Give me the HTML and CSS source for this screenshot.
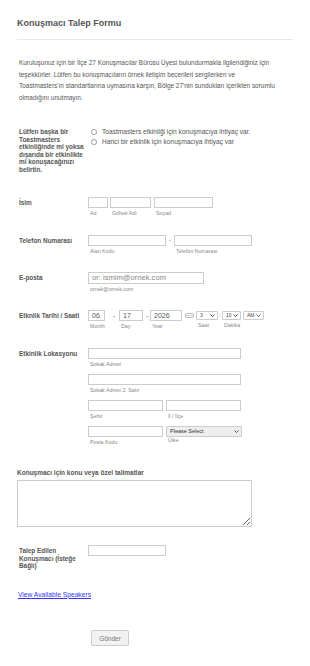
FILE: index.html
```html
<!DOCTYPE html>
<html lang="tr">
<head>
    <meta charset="UTF-8">
    <meta name="viewport" content="width=device-width, initial-scale=1.0">
    <title>Konuşmacı Talep Formu</title>
    <link rel="stylesheet" href="styles.css">
</head>
<body>

    <form class="form">
        <div class="form-header">
            <h2>Konuşmacı Talep Formu</h2>
        </div>

        <p class="intro">Kuruluşunuz için bir İlçe 27 Konuşmacılar Bürosu Üyesi bulundurmakla ilgilendiğiniz için teşekkürler. Lütfen bu konuşmacıların örnek iletişim becerileri sergilerken ve<br>Toastmasters'ın standartlarına uymasına karşın, Bölge 27'nin sundukları içerikten sorumlu olmadığını unutmayın.</p>

        <div class="row row-radio">
            <label class="row-label">Lütfen başka bir Toastmasters etkinliğinde mi yoksa dışarıda bir etkinlikte mi konuşacağınızı belirtin.</label>
            <div class="radio-list">
                <label class="radio-item"><input type="radio" name="event">Toastmasters etkinliği için konuşmacıya ihtiyaç var.</label>
                <label class="radio-item"><input type="radio" name="event">Harici bir etkinlik için konuşmacıya ihtiyaç var</label>
            </div>
        </div>

        <div class="row row-name">
            <label class="row-label">İsim</label>
            <div class="field-group">
                <span class="sub-field"><input class="text-input w-first" type="text"><span class="sub-label">Ad</span></span>
                <span class="sub-field gap-2"><input class="text-input w-middle" type="text"><span class="sub-label">Göbek Adı</span></span>
                <span class="sub-field gap-3"><input class="text-input w-last" type="text"><span class="sub-label">Soyad</span></span>
            </div>
        </div>

        <div class="row">
            <label class="row-label">Telefon Numarası</label>
            <div class="field-group">
                <span class="sub-field"><input class="text-input w-phone" type="text"><span class="sub-label">Alan Kodu</span></span>
                <span class="phone-sep">-</span>
                <span class="sub-field"><input class="text-input w-phone" type="text"><span class="sub-label">Telefon Numarası</span></span>
            </div>
        </div>

        <div class="row row-email">
            <label class="row-label">E-posta</label>
            <div class="sub-field">
                <input class="text-input email-input" type="email" placeholder="or: ismim@ornek.com">
                <span class="sub-label">ornek@ornek.com</span>
            </div>
        </div>

        <div class="row row-date">
            <label class="row-label">Etknlik Tarihi / Saati</label>
            <div class="field-group">
                <span class="sub-field"><input class="text-input w-month" type="text" value="06"><span class="sub-label">Month</span></span>
                <span class="date-sep sep-a">-</span>
                <span class="sub-field"><input class="text-input w-day" type="text" value="17"><span class="sub-label">Day</span></span>
                <span class="date-sep sep-b">-</span>
                <span class="sub-field"><input class="text-input w-year" type="text" value="2026"><span class="sub-label">Year</span></span>
                <svg class="cal-icon" width="9" height="5" viewBox="0 0 9 5">
                    <rect x="0.5" y="0.5" width="8" height="4" rx="1" fill="none" stroke="#aaa" stroke-width="0.8"/>
                    <line x1="0.5" y1="2.5" x2="8.5" y2="2.5" stroke="#aaa" stroke-width="0.6"/>
                </svg>
                <span class="sub-field select-field w-hour">
                    <select class="select-input"><option>3</option></select>
                    <svg class="chevron" width="5" height="3" viewBox="0 0 5 3"><path d="M0.5 0.5 L2.5 2.5 L4.5 0.5" fill="none" stroke="#444" stroke-width="0.9"/></svg>
                    <span class="sub-label">Saat</span>
                </span>
                <span class="time-sep">:</span>
                <span class="sub-field select-field w-min">
                    <select class="select-input"><option>10</option></select>
                    <svg class="chevron" width="5" height="3" viewBox="0 0 5 3"><path d="M0.5 0.5 L2.5 2.5 L4.5 0.5" fill="none" stroke="#444" stroke-width="0.9"/></svg>
                    <span class="sub-label">Dakika</span>
                </span>
                <span class="sub-field select-field w-ampm">
                    <select class="select-input"><option>AM</option></select>
                    <svg class="chevron" width="5" height="3" viewBox="0 0 5 3"><path d="M0.5 0.5 L2.5 2.5 L4.5 0.5" fill="none" stroke="#444" stroke-width="0.9"/></svg>
                </span>
            </div>
        </div>

        <div class="row row-location">
            <label class="row-label">Etkinlik Lokasyonu</label>
            <div class="address">
                <div class="sub-field addr-line"><input class="text-input w-full" type="text"><span class="sub-label">Sokak Adresi</span></div>
                <div class="sub-field addr-line"><input class="text-input w-full" type="text"><span class="sub-label">Sokak Adresi 2. Satır</span></div>
                <div class="field-group addr-line">
                    <span class="sub-field"><input class="text-input w-half" type="text"><span class="sub-label">Şehir</span></span>
                    <span class="sub-field gap-3"><input class="text-input w-half" type="text"><span class="sub-label">İl / İlçe</span></span>
                </div>
                <div class="field-group">
                    <span class="sub-field"><input class="text-input w-half" type="text"><span class="sub-label">Posta Kodu</span></span>
                    <span class="sub-field select-field gap-3 w-country">
                        <select class="select-input country-select"><option>Please Select</option></select>
                        <svg class="chevron" width="5" height="3" viewBox="0 0 5 3"><path d="M0.5 0.5 L2.5 2.5 L4.5 0.5" fill="none" stroke="#444" stroke-width="0.9"/></svg>
                        <span class="sub-label">Ülke</span>
                    </span>
                </div>
            </div>
        </div>

        <div class="block">
            <label class="block-label">Konuşmacı için konu veya özel talimatlar</label>
            <textarea class="notes"></textarea>
        </div>

        <div class="row row-speaker">
            <label class="row-label">Talep Edilen Konuşmacı (İsteğe Bağlı)</label>
            <input class="text-input w-phone" type="text">
        </div>

        <a class="speakers-link" href="#">View Available Speakers</a>

        <div class="submit-area">
            <button class="submit-btn" type="button">Gönder</button>
        </div>
    </form>

</body>
</html>
```

FILE: styles.css
```css
body {
    margin: 0;
    font-family: "Liberation Sans", Arial, sans-serif;
    color: #555;
    background-color: #fff;
}

.form {
    width: 276px;
    padding: 0 17px;
}

.form-header {
    padding: 18px 0 11px;
    border-bottom: 1px solid #e8e8e8;
}

.form-header h2 {
    margin: 0;
    font-size: 9px;
    line-height: 10px;
    font-weight: bold;
    color: #555;
}

.intro {
    width: 272px;
    margin: 17px 0 0 2px;
    font-size: 6.45px;
    line-height: 11.6px;
}

.row {
    display: flex;
    align-items: flex-start;
    padding-left: 2px;
    margin-top: 19px;
}

.row-label {
    flex: none;
    width: 66px;
    padding: 2px 3px 0 0;
    font-size: 6.4px;
    line-height: 7.5px;
    font-weight: bold;
}

.row-radio {
    margin-top: 23px;
}

.radio-list {
    display: flex;
    flex-direction: column;
    gap: 3px;
    padding: 2px 0 0 3px;
}

.radio-item {
    display: flex;
    align-items: center;
    font-size: 6.6px;
    line-height: 7px;
}

.radio-item input {
    appearance: none;
    width: 5.5px;
    height: 5.5px;
    margin: 0 5.5px 0 0;
    border: 0.6px solid #999;
    border-radius: 50%;
}

.row-name {
    margin-top: 23.5px;
}

.field-group {
    display: flex;
    align-items: flex-start;
}

.sub-field {
    display: flex;
    flex-direction: column;
}

.sub-label {
    margin-top: 2px;
    padding-left: 2px;
    font-size: 5.3px;
    line-height: 6px;
    color: #888;
}

.text-input {
    box-sizing: border-box;
    height: 11px;
    margin: 0;
    padding: 0 3px;
    border: 1px solid #ccc;
    font-family: "Liberation Sans", Arial, sans-serif;
    font-size: 7px;
    color: #555;
    background: #fff;
}

.gap-2 { margin-left: 2px; }
.gap-3 { margin-left: 3px; }

.w-first { width: 20px; }
.w-middle { width: 41px; }
.w-last { width: 59px; }
.w-phone { width: 78px; }
.w-full { width: 153px; }
.w-half { width: 75px; }

.phone-sep {
    width: 8px;
    text-align: center;
    font-size: 6px;
    line-height: 11px;
}

.row-email {
    margin-top: 18px;
}

.email-input {
    width: 116px;
    height: 12px;
    font-size: 7.6px;
}

.email-input::placeholder {
    color: #888;
}

.row-date {
    margin-top: 18px;
}

.w-month { width: 17px; }
.w-day { width: 24px; }
.w-year { width: 32px; }

.date-sep {
    font-size: 7px;
    line-height: 11px;
}

.sep-a {
    width: 14px;
    padding-left: 8px;
    box-sizing: border-box;
}

.sep-b {
    width: 7px;
    padding-left: 3px;
    box-sizing: border-box;
}

.cal-icon {
    margin: 3px 2px 0 3px;
}

.select-field {
    position: relative;
}

.select-input {
    appearance: none;
    box-sizing: border-box;
    width: 100%;
    height: 9px;
    margin: 1px 0 0;
    padding: 0 0 0 3px;
    border: 1px solid #ccc;
    border-radius: 1px;
    background: #fff;
    font-family: "Liberation Sans", Arial, sans-serif;
    font-size: 5px;
    color: #444;
}

.chevron {
    position: absolute;
    top: 4px;
    right: 3px;
}

.w-hour { width: 22px; }
.w-min { width: 19px; }
.w-ampm { width: 21px; margin-left: 2px; }

.time-sep {
    width: 4px;
    text-align: center;
    font-size: 6px;
    line-height: 10px;
}

.addr-line {
    margin-bottom: 7px;
}

.w-country {
    width: 76px;
}

.country-select {
    height: 11px;
    margin: 0;
    background: #eee;
    font-size: 5.5px;
    color: #333;
}

.w-country .chevron {
    top: 4px;
}

.w-country .sub-label {
    margin-top: 0;
}

.block {
    margin-top: 24px;
}

.block-label {
    display: block;
    font-size: 6.5px;
    line-height: 7.5px;
    font-weight: bold;
}

.notes {
    display: block;
    box-sizing: border-box;
    width: 235px;
    height: 47px;
    margin-top: 4px;
    border: 1px solid #ccc;
}

.row-speaker {
    margin-top: 18px;
}

.speakers-link {
    display: block;
    margin: 21px 0 0 1px;
    font-size: 6.7px;
    line-height: 8px;
    color: #33f;
}

.submit-area {
    margin: 28px 0 18px 74px;
}

.submit-btn {
    width: 38px;
    height: 16px;
    padding: 0;
    border: 1px solid #ccc;
    border-radius: 2px;
    background: #f2f2f2;
    font-family: "Liberation Sans", Arial, sans-serif;
    font-size: 6.5px;
    color: #777;
}
```
